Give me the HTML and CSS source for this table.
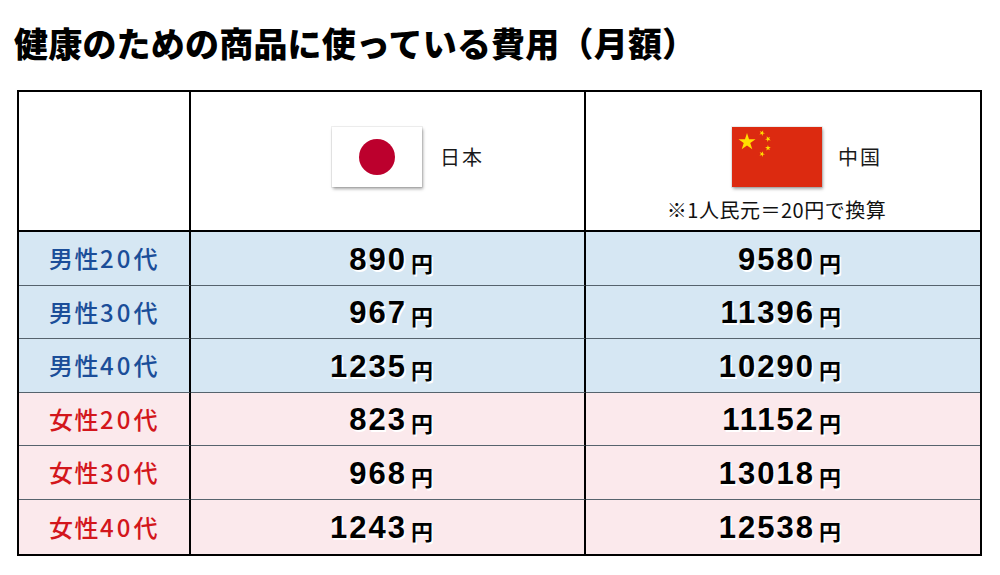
FILE: index.html
```html
<!DOCTYPE html>
<html lang="ja">
<head>
<meta charset="utf-8">
<title>健康のための商品に使っている費用（月額）</title>
<link rel="stylesheet" href="styles.css">
</head>
<body>
<h1 class="title">健康のための商品に使っている費用（月額）</h1>
<div class="table">
  <div class="cell head"></div>
  <div class="cell head">
    <div class="hrow hrow-jp">
      <svg class="flag" viewBox="0 0 90 60" width="90" height="60">
        <rect width="90" height="60" fill="#ffffff"/>
        <circle cx="45" cy="30" r="18" fill="#bc002d"/>
      </svg>
      <span class="country">日本</span>
    </div>
  </div>
  <div class="cell head">
    <div class="hrow hrow-cn">
      <svg class="flag" viewBox="0 0 90 60" width="90" height="60">
        <defs>
          <polygon id="star" points="0,-1 0.2245,-0.309 0.951,-0.309 0.363,0.118 0.588,0.809 0,0.382 -0.588,0.809 -0.363,0.118 -0.951,-0.309 -0.2245,-0.309"/>
        </defs>
        <rect width="90" height="60" fill="#dc2a10"/>
        <use href="#star" fill="#ffde00" transform="translate(15 15) scale(9)"/>
        <use href="#star" fill="#ffde00" transform="translate(30 6) rotate(23) scale(3)"/>
        <use href="#star" fill="#ffde00" transform="translate(36 12) rotate(46) scale(3)"/>
        <use href="#star" fill="#ffde00" transform="translate(36 21) rotate(70) scale(3)"/>
        <use href="#star" fill="#ffde00" transform="translate(30 27) rotate(21) scale(3)"/>
      </svg>
      <span class="country">中国</span>
    </div>
    <div class="note">※1人民元＝20円で換算</div>
  </div>

  <div class="cell label male">男性<span class="d">20</span>代</div>
  <div class="cell val male jp"><span class="num">890</span><span class="yen">円</span></div>
  <div class="cell val male cn"><span class="num">9580</span><span class="yen">円</span></div>

  <div class="cell label male">男性<span class="d">30</span>代</div>
  <div class="cell val male jp"><span class="num">967</span><span class="yen">円</span></div>
  <div class="cell val male cn"><span class="num">11396</span><span class="yen">円</span></div>

  <div class="cell label male">男性<span class="d">40</span>代</div>
  <div class="cell val male jp"><span class="num">1235</span><span class="yen">円</span></div>
  <div class="cell val male cn"><span class="num">10290</span><span class="yen">円</span></div>

  <div class="cell label female">女性<span class="d">20</span>代</div>
  <div class="cell val female jp"><span class="num">823</span><span class="yen">円</span></div>
  <div class="cell val female cn"><span class="num">11152</span><span class="yen">円</span></div>

  <div class="cell label female">女性<span class="d">30</span>代</div>
  <div class="cell val female jp"><span class="num">968</span><span class="yen">円</span></div>
  <div class="cell val female cn"><span class="num">13018</span><span class="yen">円</span></div>

  <div class="cell label female last">女性<span class="d">40</span>代</div>
  <div class="cell val female jp last"><span class="num">1243</span><span class="yen">円</span></div>
  <div class="cell val female cn last"><span class="num">12538</span><span class="yen">円</span></div>
</div>
</body>
</html>
```
FILE: styles.css
```css
* {
  box-sizing: border-box;
}

html, body {
  margin: 0;
  padding: 0;
  background: #ffffff;
}

body {
  font-family: "Noto Sans CJK JP", "Noto Sans", sans-serif;
  color: #111111;
}

.title {
  margin: 0 0 30px 0;
  padding: 26px 0 0 14px;
  font-size: 34px;
  line-height: 34px;
  font-weight: 900;
  color: #000000;
  letter-spacing: 0.2px;
}

.table {
  margin-left: 17px;
  width: 965px;
  border: 2px solid #000000;
  display: grid;
  grid-template-columns: 172px 395px 394px;
  grid-template-rows: 140px 54px 53px 54px 53px 54px 54px;
}

.cell {
  border-bottom: 1px solid #56636d;
}

.cell:nth-child(3n+1),
.cell:nth-child(3n+2) {
  border-right: 2px solid #000000;
}

.cell.head {
  border-bottom: 2px solid #000000;
  background: #ffffff;
  display: flex;
  flex-direction: column;
  align-items: center;
  padding-top: 35px;
}

.cell.last {
  border-bottom: none;
}

.hrow {
  display: flex;
  align-items: center;
}

.hrow-jp {
  gap: 18px;
  margin-left: 41px;
}

.hrow-cn {
  gap: 16px;
  margin-left: 48px;
}

.flag {
  display: block;
  box-shadow: 0 0 0 1px rgba(0, 0, 0, 0.06), 1px 2px 3px rgba(0, 0, 0, 0.35);
}

.country {
  font-size: 20px;
  letter-spacing: 2px;
  line-height: 24px;
  color: #1a1a1a;
}

.note {
  margin-top: 12px;
  margin-right: 13px;
  font-size: 20px;
  line-height: 22px;
  letter-spacing: 0.5px;
  color: #111111;
}

.male {
  background: #d6e7f3;
}

.female {
  background: #fbe9ec;
}

.label {
  display: flex;
  align-items: center;
  justify-content: center;
  font-size: 24px;
  font-weight: 500;
  letter-spacing: 1.5px;
  padding-bottom: 2px;
}

.label.male {
  color: #1b4e99;
}

.label.female {
  color: #d3161c;
}

.label .d {
  letter-spacing: 3px;
}

.val {
  display: flex;
  align-items: center;
  justify-content: flex-end;
  padding-top: 2px;
}

.val.jp {
  padding-right: 151px;
}

.val.cn {
  padding-right: 139px;
}

.num {
  font-family: "Liberation Sans", Arial, sans-serif;
  font-weight: 700;
  font-size: 31px;
  letter-spacing: 2px;
  color: #000000;
  text-shadow: 1.5px 1.5px 0 #ffffff;
}

.yen {
  font-family: "Noto Sans CJK JP", sans-serif;
  font-weight: 700;
  font-size: 22px;
  margin-left: 4px;
  color: #000000;
  text-shadow: 1.5px 1.5px 0 #ffffff;
  position: relative;
  top: 2px;
}
```
